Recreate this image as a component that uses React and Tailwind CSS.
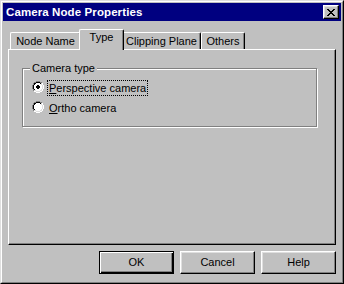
import React from "react";

const RADIO = [
  "....oooo....",
  "..ooiiiioo..",
  ".oiiwwwwiio.",
  ".oiwwwwwwio.",
  "oiwwwwwwwwio",
  "oiwwwwwwwwio",
  "oiwwwwwwwwio",
  "oiwwwwwwwwio",
  ".oiwwwwwwio.",
  ".oiiwwwwiio.",
  "..ooiiiioo..",
  "....oooo....",
];
const DOT = new Set(["5,4", "6,4", "4,5", "5,5", "6,5", "7,5", "4,6", "5,6", "6,6", "7,6", "5,7", "6,7"]);

function Radio({ checked }) {
  const rects = [];
  RADIO.forEach((row, y) => {
    row.split("").forEach((c, x) => {
      if (c === ".") return;
      const tl = x + y < 11;
      let fill;
      if (c === "o") fill = tl ? "#808080" : "#ffffff";
      else if (c === "i") fill = tl ? "#000000" : "#dfdfdf";
      else fill = checked && DOT.has(`${x},${y}`) ? "#000000" : "#ffffff";
      rects.push(<rect key={`${x}-${y}`} x={x} y={y} width="1" height="1" fill={fill} />);
    });
  });
  return (
    <svg width="12" height="12" viewBox="0 0 12 12" shapeRendering="crispEdges" className="shrink-0 mt-[1px]">
      {rects}
    </svg>
  );
}

const XMAP = ["kk....kk", ".kk..kk.", "..kkkk..", "...kk...", "..kkkk..", ".kk..kk.", "kk....kk"];

function CloseGlyph() {
  const rects = [];
  XMAP.forEach((row, y) =>
    row.split("").forEach((c, x) => {
      if (c === "k") rects.push(<rect key={`${x}-${y}`} x={x} y={y} width="1" height="1" fill="#000" />);
    })
  );
  return (
    <svg width="8" height="7" viewBox="0 0 8 7" shapeRendering="crispEdges">
      {rects}
    </svg>
  );
}

function Tab({ label, width, selected }) {
  if (selected) {
    return (
      <div
        className={`relative z-10 -mx-[2px] h-[21px] ${width} bg-[#c0c0c0] border-l border-t border-r border-l-white border-t-white border-r-black rounded-tl-[2px] rounded-tr-[2px] shadow-[inset_-1px_0_0_#808080] flex justify-center pt-[1px] leading-[13px]`}
      >
        {label}
      </div>
    );
  }
  return (
    <div
      className={`mt-[3px] h-[17px] ${width} bg-[#c0c0c0] border-l border-t border-r border-l-white border-t-white border-r-black rounded-tl-[2px] rounded-tr-[2px] shadow-[inset_-1px_0_0_#808080] flex justify-center items-center leading-[13px]`}
    >
      {label}
    </div>
  );
}

function Button({ children, isDefault }) {
  if (isDefault) {
    return (
      <div className="w-[75px] h-[23px] border border-black bg-[#c0c0c0] shadow-[inset_1px_1px_0_#ffffff,inset_-1px_-1px_0_#000000,inset_-2px_-2px_0_#808080] flex items-center justify-center">
        {children}
      </div>
    );
  }
  return (
    <div className="w-[75px] h-[23px] border border-t-white border-l-white border-r-black border-b-black bg-[#c0c0c0] shadow-[inset_-1px_-1px_0_#808080,inset_1px_1px_0_#dfdfdf] flex items-center justify-center">
      {children}
    </div>
  );
}

export default function App() {
  return (
    <div className="w-[344px] h-[284px] bg-[#c0c0c0] border border-t-[#dfdfdf] border-l-[#dfdfdf] border-r-black border-b-black font-['Liberation_Sans',Arial,sans-serif] text-[11px] leading-[13px] text-black">
      <div className="h-full border border-t-white border-l-white border-r-[#808080] border-b-[#808080] p-px flex flex-col">
        {/* Title bar */}
        <div className="h-[18px] bg-[#000080] flex items-center justify-between pl-[3px] pr-[2px]">
          <span className="text-white font-bold text-[11.5px] tracking-[0.1px]">Camera Node Properties</span>
          <div className="w-[16px] h-[14px] bg-[#c0c0c0] border border-t-white border-l-white border-r-black border-b-black shadow-[inset_-1px_-1px_0_#808080,inset_1px_1px_0_#dfdfdf] flex items-center justify-center">
            <CloseGlyph />
          </div>
        </div>

        {/* Body */}
        <div className="flex-1 flex flex-col px-[5px] pt-[8px] pb-[7px]">
          {/* Tabs */}
          <div className="flex items-start h-[20px] pl-[2px]">
            <Tab label="Node Name" width="w-[71px]" />
            <Tab label="Type" width="w-[45px]" selected />
            <Tab label="Clipping Plane" width="w-[79px]" />
            <Tab label="Others" width="w-[44px]" />
          </div>

          {/* Panel */}
          <div className="h-[196px] border border-t-white border-l-white border-r-black border-b-black shadow-[inset_-1px_-1px_0_#808080] pt-[18px]">
            <div className="relative ml-[13px] mr-[18px] h-[59px] border border-[#808080] shadow-[inset_1px_1px_0_#ffffff,1px_1px_0_#ffffff] pt-[11px] pl-[9px] flex flex-col gap-[4px]">
              <span className="absolute top-[-7px] left-[7px] bg-[#c0c0c0] px-[2px] leading-[13px]">
                Camera type
              </span>
              <div className="flex items-start gap-[3px] h-[16px]">
                <Radio checked />
                <span className="border border-dotted border-black px-[1px] leading-[14px]">
                  <span className="underline">P</span>erspective camera
                </span>
              </div>
              <div className="flex items-start gap-[3px] h-[16px]">
                <Radio />
                <span className="border border-dotted border-transparent px-[1px] leading-[14px]">
                  <span className="underline">O</span>rtho camera
                </span>
              </div>
            </div>
          </div>

          {/* Buttons */}
          <div className="mt-[6px] flex justify-end gap-[6px]">
            <Button isDefault>OK</Button>
            <Button>Cancel</Button>
            <Button>Help</Button>
          </div>
        </div>
      </div>
    </div>
  );
}
